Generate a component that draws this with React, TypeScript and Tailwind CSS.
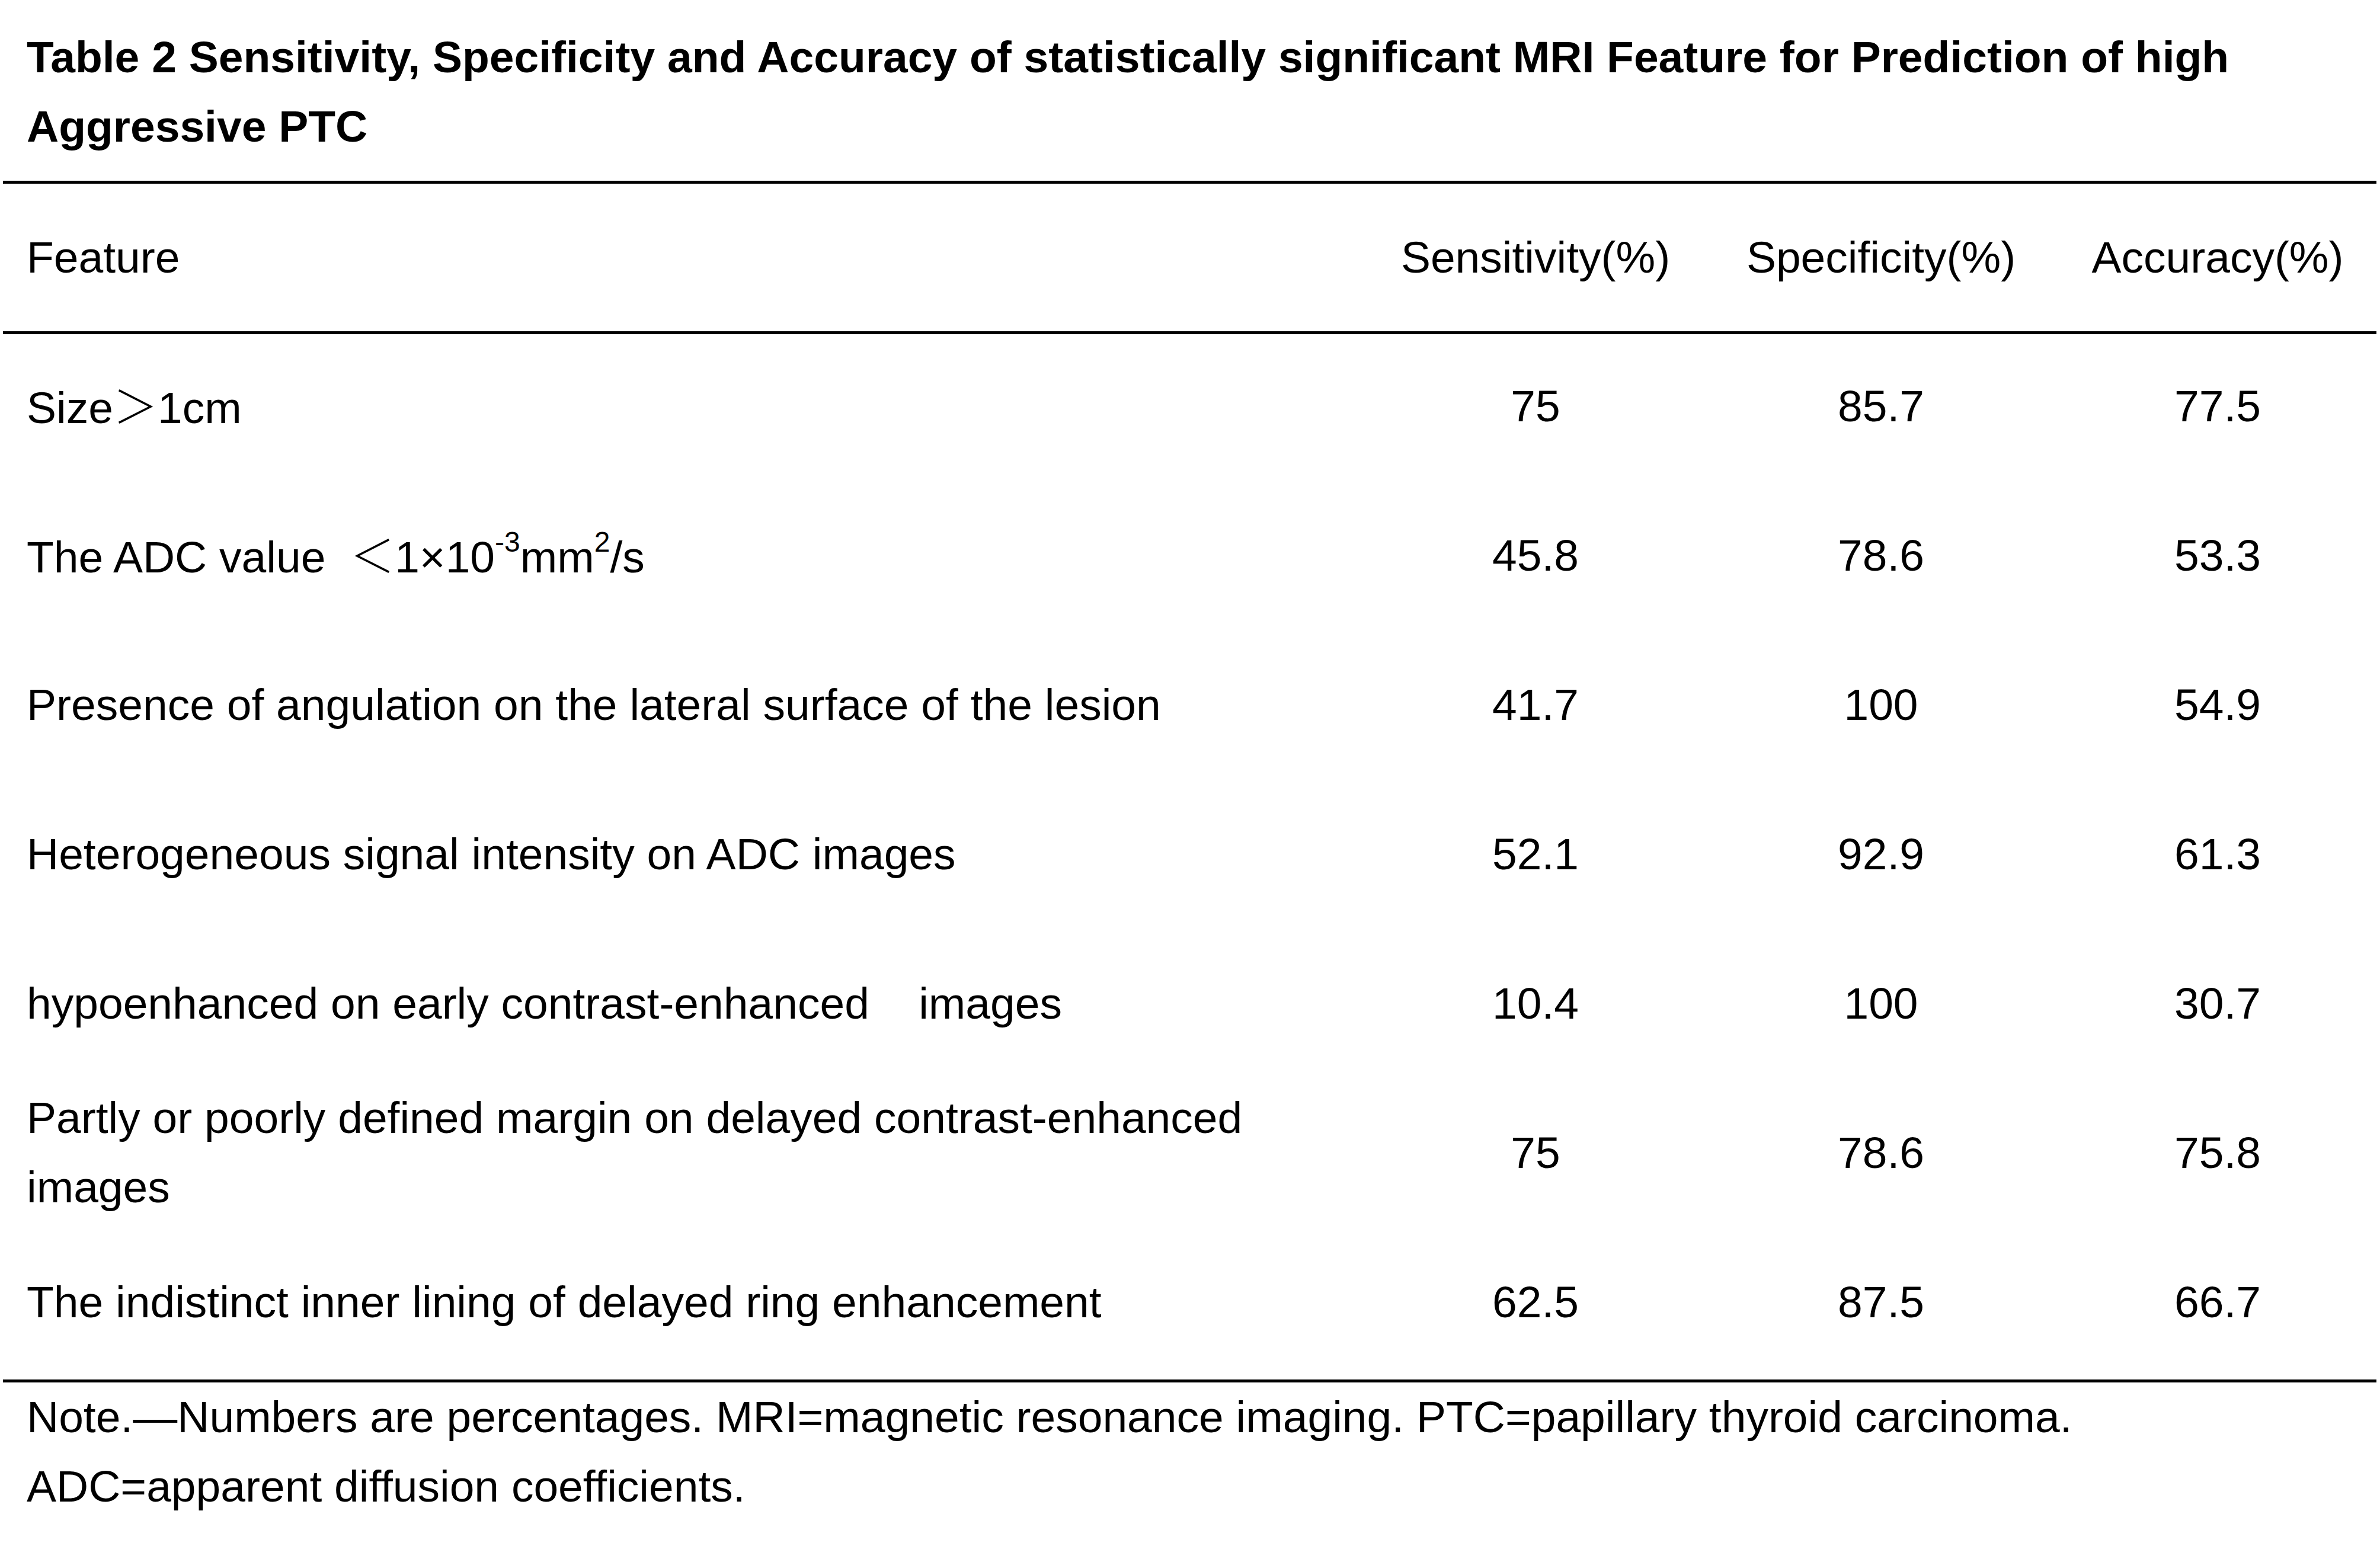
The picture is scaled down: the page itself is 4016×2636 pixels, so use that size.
import React from "react";

const rows: { label: React.ReactNode; s: string; sp: string; a: string }[] = [
  {
    label: (
      <>
        Size<span className="font-['Noto_Sans_CJK_SC',sans-serif] font-light">＞</span>1cm
      </>
    ),
    s: "75",
    sp: "85.7",
    a: "77.5",
  },
  {
    label: (
      <span className="whitespace-pre">
        The ADC value{"  "}
        <span className="font-['Noto_Sans_CJK_SC',sans-serif] font-light">＜</span>1×10
        <span className="text-[48px] leading-none align-[35px]">-3</span>mm
        <span className="text-[48px] leading-none align-[35px]">2</span>/s
      </span>
    ),
    s: "45.8",
    sp: "78.6",
    a: "53.3",
  },
  {
    label: "Presence of angulation on the lateral surface of the lesion",
    s: "41.7",
    sp: "100",
    a: "54.9",
  },
  {
    label: "Heterogeneous signal intensity on ADC images",
    s: "52.1",
    sp: "92.9",
    a: "61.3",
  },
  {
    label: (
      <span className="whitespace-pre">{"hypoenhanced on early contrast-enhanced    images"}</span>
    ),
    s: "10.4",
    sp: "100",
    a: "30.7",
  },
  {
    label: (
      <>
        Partly or poorly defined margin on delayed contrast-enhanced
        <br />
        images
      </>
    ),
    s: "75",
    sp: "78.6",
    a: "75.8",
  },
  {
    label: "The indistinct inner lining of delayed ring enhancement",
    s: "62.5",
    sp: "87.5",
    a: "66.7",
  },
];

export default function App() {
  return (
    <div className="w-[4016px] h-[2636px] bg-white text-black font-['Liberation_Sans','Noto_Sans_CJK_SC',sans-serif] text-[75px] leading-[117px]">
      <div className="h-[305px] pl-[45px] pt-[38px] font-bold">
        Table 2 Sensitivity, Specificity and Accuracy of statistically significant MRI Feature for Prediction of high
        <br />
        Aggressive PTC
      </div>
      <div className="ml-[5px] w-[4005px] border-t-[5px] border-black">
        <div className="grid h-[254px] grid-cols-[2303px_566px_600px_536px] items-center border-b-[5px] border-black">
          <div className="pl-[40px]">Feature</div>
          <div className="text-center">Sensitivity(%)</div>
          <div className="text-center">Specificity(%)</div>
          <div className="text-center">Accuracy(%)</div>
        </div>
        <div className="flex flex-col border-b-[5px] border-black">
          {rows.map((r, i) => (
            <div
              key={i}
              className="grid h-[252px] grid-cols-[2303px_566px_600px_536px] items-center pb-[10px]"
            >
              <div className="pl-[40px]">{r.label}</div>
              <div className="text-center">{r.s}</div>
              <div className="text-center">{r.sp}</div>
              <div className="text-center">{r.a}</div>
            </div>
          ))}
        </div>
      </div>
      <div className="pl-[45px]">
        Note.—Numbers are percentages. MRI=magnetic resonance imaging. PTC=papillary thyroid carcinoma.
        <br />
        ADC=apparent diffusion coefficients.
      </div>
    </div>
  );
}
